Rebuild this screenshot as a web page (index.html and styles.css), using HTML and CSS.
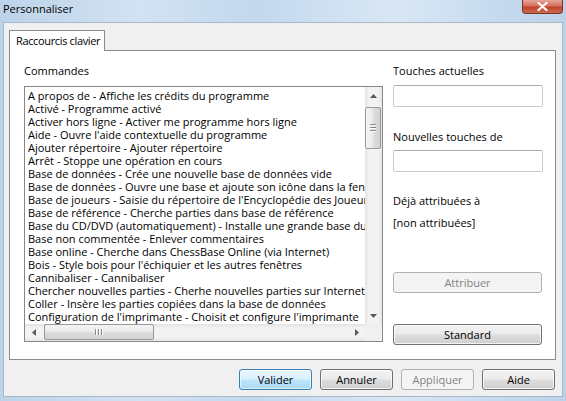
FILE: index.html
```html
<!DOCTYPE html>
<html lang="fr">
<head>
<meta charset="utf-8">
<title>Personnaliser</title>
<link rel="stylesheet" href="styles.css">
</head>
<body>
<div class="window">
  <div class="titlebar">
    <span class="title">Personnaliser</span>
    <div class="close">
      <svg width="13" height="9" viewBox="0 0 13 9"><path d="M2.5 1 L10.5 8 M10.5 1 L2.5 8" stroke="#ffffff" stroke-width="2.2" stroke-linecap="round"/></svg>
    </div>
  </div>
  <div class="client">
    <div class="tabs"><div class="tab">Raccourcis clavier</div></div>
    <div class="panel">
      <div class="left">
        <div class="label">Commandes</div>
        <div class="listbox">
          <ul class="items">
            <li>A propos de - Affiche les crédits du programme</li>
            <li>Activé - Programme activé</li>
            <li>Activer hors ligne - Activer me programme hors ligne</li>
            <li>Aide - Ouvre l'aide contextuelle du programme</li>
            <li>Ajouter répertoire - Ajouter répertoire</li>
            <li>Arrêt - Stoppe une opération en cours</li>
            <li>Base de données - Crée une nouvelle base de données vide</li>
            <li>Base de données - Ouvre une base et ajoute son icône dans la fenêtre</li>
            <li>Base de joueurs - Saisie du répertoire de l'Encyclopédie des Joueurs</li>
            <li>Base de référence - Cherche parties dans base de référence</li>
            <li>Base du CD/DVD (automatiquement) - Installe une grande base du CD/DVD</li>
            <li>Base non commentée - Enlever commentaires</li>
            <li>Base online - Cherche dans ChessBase Online (via Internet)</li>
            <li>Bois - Style bois pour l'échiquier et les autres fenêtres</li>
            <li>Cannibaliser - Cannibaliser</li>
            <li>Chercher nouvelles parties - Cherhe nouvelles parties sur Internet, ChessBase</li>
            <li>Coller - Insère les parties copiées dans la base de données</li>
            <li>Configuration de l'imprimante - Choisit et configure l'imprimante</li>
          </ul>
          <div class="vscroll">
            <div class="sbtn"><svg width="7" height="4" viewBox="0 0 7 4"><path d="M0 4 L3.5 0 L7 4 Z" fill="#5a5a5a"/></svg></div>
            <div class="vtrack">
              <div class="vthumb"><span class="grip"></span><span class="grip"></span><span class="grip"></span></div>
            </div>
            <div class="sbtn"><svg width="7" height="4" viewBox="0 0 7 4"><path d="M0 0 L3.5 4 L7 0 Z" fill="#5a5a5a"/></svg></div>
          </div>
          <div class="hscroll">
            <div class="sbtn"><svg width="4" height="7" viewBox="0 0 4 7"><path d="M4 0 L0 3.5 L4 7 Z" fill="#5a5a5a"/></svg></div>
            <div class="htrack">
              <div class="hthumb"><span class="vgrip"></span><span class="vgrip"></span><span class="vgrip"></span></div>
            </div>
            <div class="sbtn"><svg width="4" height="7" viewBox="0 0 4 7"><path d="M0 0 L4 3.5 L0 7 Z" fill="#5a5a5a"/></svg></div>
          </div>
          <div class="corner"></div>
        </div>
      </div>
      <div class="right">
        <div class="label">Touches actuelles</div>
        <div class="input"></div>
        <div class="label l2">Nouvelles touches de</div>
        <div class="input"></div>
        <div class="label l3">Déjà attribuées à</div>
        <div class="label l4">[non attribuées]</div>
        <div class="btn disabled wide b1">Attribuer</div>
        <div class="btn wide b2">Standard</div>
      </div>
    </div>
    <div class="buttons">
      <div class="btn default">Valider</div>
      <div class="btn">Annuler</div>
      <div class="btn disabled">Appliquer</div>
      <div class="btn">Aide</div>
    </div>
  </div>
</div>
</body>
</html>
```

FILE: styles.css
```css
* { box-sizing: border-box; }
html, body { margin: 0; padding: 0; }
body {
  width: 566px;
  height: 401px;
  overflow: hidden;
  font-family: "Open Sans", "Noto Sans", sans-serif;
  font-size: 11px;
  color: #000;
}
.window {
  width: 566px;
  height: 401px;
  display: flex;
  flex-direction: column;
  background: linear-gradient(90deg, #bdd3ea 0%, #d2e2f2 25%, #c3d8ee 45%, #d9e7f5 70%, #c6daef 88%, #bcd2e9 100%);
}
.titlebar {
  height: 22px;
  display: flex;
  align-items: flex-start;
  flex: none;
}
.title {
  padding-left: 3px;
  line-height: 18px;
  font-size: 11px;
  white-space: nowrap;
}
.close {
  margin-left: auto;
  margin-right: 3px;
  width: 41px;
  height: 14px;
  border: 1px solid #7a3427;
  border-top: none;
  border-radius: 0 0 4px 4px;
  background: linear-gradient(180deg, #e8a597 0%, #d46f5c 45%, #c0432d 55%, #cf6a52 100%);
  display: flex;
  align-items: center;
  justify-content: center;
}
.client {
  margin: 0 3px 4px 3px;
  height: 375px;
  background: #f0f0f0;
  border: 1px solid #a9b8c8;
  padding: 7px 7px 0 5px;
  display: flex;
  flex-direction: column;
}
.tabs {
  display: flex;
  height: 21px;
  margin-bottom: -1px;
  position: relative;
  z-index: 1;
}
.tab {
  width: 96px;
  height: 21px;
  background: #fff;
  border: 1px solid #898c95;
  border-bottom: none;
  padding-left: 6px;
  line-height: 19px;
  white-space: nowrap;
  letter-spacing: -0.35px;
}
.panel {
  width: 547px;
  height: 310px;
  background: #fff;
  border: 1px solid #898c95;
  display: flex;
  padding: 12px 0 0 14px;
}
.label {
  line-height: 15px;
  height: 15px;
  white-space: nowrap;
}
.left {
  width: 359px;
}
.left .label {
  margin-bottom: 8px;
}
.listbox {
  width: 359px;
  height: 256px;
  border: 1px solid #828790;
  display: grid;
  grid-template-columns: 340px 17px;
  grid-template-rows: 237px 17px;
}
.items {
  list-style: none;
  margin: 0;
  padding: 2px 0 0 3px;
  overflow: hidden;
}
.items li {
  height: 13px;
  line-height: 13px;
  white-space: nowrap;
}
.vscroll {
  display: flex;
  flex-direction: column;
  background: linear-gradient(90deg, #e3e3e3 0%, #f3f3f3 25%, #f3f3f3 75%, #e6e6e6 100%);
}
.hscroll {
  display: flex;
  background: linear-gradient(180deg, #e3e3e3 0%, #f3f3f3 25%, #f3f3f3 75%, #e6e6e6 100%);
}
.corner { background: #f0f0f0; }
.sbtn {
  width: 17px;
  height: 17px;
  flex: none;
  display: flex;
  align-items: center;
  justify-content: center;
}
.vtrack { flex: 1; padding-top: 3px; }
.vthumb {
  width: 16px;
  height: 42px;
  border: 1px solid #979797;
  border-radius: 2px;
  background: linear-gradient(90deg, #f4f4f4 0%, #ececec 45%, #dcdcdc 55%, #d2d2d2 100%);
  display: flex;
  flex-direction: column;
  align-items: center;
  justify-content: center;
  gap: 1px;
}
.grip {
  width: 6px;
  height: 2px;
  border-top: 1px solid #8a8a8a;
  border-bottom: 1px solid #fbfbfb;
}
.htrack { flex: 1; padding-left: 2px; }
.hthumb {
  width: 110px;
  height: 16px;
  border: 1px solid #979797;
  border-radius: 2px;
  background: linear-gradient(180deg, #f4f4f4 0%, #ececec 45%, #dcdcdc 55%, #d2d2d2 100%);
  display: flex;
  align-items: center;
  justify-content: center;
  gap: 1px;
}
.vgrip {
  width: 2px;
  height: 6px;
  border-left: 1px solid #8a8a8a;
  border-right: 1px solid #fbfbfb;
}
.right {
  width: 150px;
  margin-left: 10px;
  display: flex;
  flex-direction: column;
}
.input {
  margin-top: 7px;
  width: 150px;
  height: 22px;
  border: 1px solid #c7cbd1;
  border-top-color: #abadb3;
  border-radius: 2px;
  background: #fff;
}
.right .l2 { margin-top: 22px; }
.right .l2 + .input { margin-top: 6px; }
.right .l3 { margin-top: 21px; }
.right .l4 { margin-top: 7px; }
.btn {
  width: 73px;
  height: 21px;
  border: 1px solid #707070;
  border-radius: 3px;
  background: linear-gradient(180deg, #f2f2f2 0%, #ebebeb 49%, #dddddd 51%, #cfcfcf 100%);
  box-shadow: inset 0 0 0 1px rgba(255,255,255,0.75);
  text-align: center;
  line-height: 19px;
  white-space: nowrap;
}
.btn.wide { width: 149px; }
.btn.b1 { margin-top: 42px; }
.btn.b2 { margin-top: 31px; }
.btn.disabled {
  border-color: #adb2b5;
  background: #f4f4f4;
  color: #838383;
  box-shadow: none;
}
.btn.default {
  border-color: #3c7fb1;
  background: linear-gradient(180deg, #eaf6fd 0%, #d9f0fc 49%, #bee6fd 51%, #a7d9f5 100%);
  box-shadow: inset 0 0 0 1px rgba(255,255,255,0.6);
}
.buttons {
  display: flex;
  justify-content: flex-end;
  gap: 8px;
  margin-top: 9px;
}
```
